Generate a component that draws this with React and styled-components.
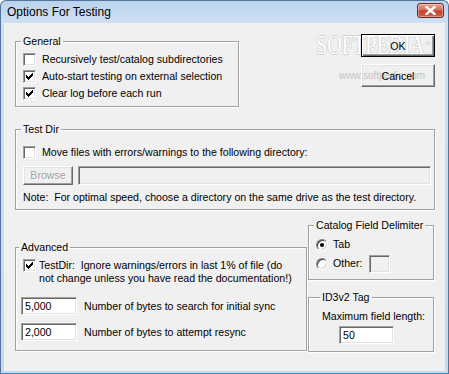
import React from 'react'
import styled, { createGlobalStyle } from 'styled-components'

const GlobalStyle = createGlobalStyle`
  html, body {
    margin: 0;
    padding: 0;
    background: #fff;
  }
  body {
    font-family: "Liberation Sans", Arial, sans-serif;
    font-size: 10.6px;
    color: #000;
  }
  * {
    box-sizing: border-box;
  }
`

const Window = styled.div`
  width: 449px;
  height: 374px;
  display: flex;
  flex-direction: column;
  background: linear-gradient(#bcd3ee, #cfe0f3 22px, #c6d9ef);
  border: 1px solid #55759a;
  border-bottom-color: #2f8fd0;
  border-radius: 6px 6px 0 0;
  overflow: hidden;
`

const TitleBar = styled.div`
  height: 22px;
  flex: none;
  display: flex;
  align-items: center;
  justify-content: space-between;
  padding: 0 4px 0 6px;
  font-size: 12px;
  color: #000;
`

const CloseButton = styled.div`
  width: 27px;
  height: 15px;
  margin-top: -3px;
  display: flex;
  align-items: center;
  justify-content: center;
  border: 1px solid #6d2b1f;
  border-radius: 3px;
  background: linear-gradient(#e7a493, #d3705a 45%, #c0412b 55%, #d2664c);
  box-shadow: inset 0 0 0 1px rgba(255, 255, 255, 0.35);
`

const Client = styled.div`
  position: relative;
  z-index: 0;
  flex: 1;
  margin: 0 3px 2px 3px;
  background: #f0f0f0;
  padding: 11px 10px 0 11px;
  display: flex;
  flex-direction: column;
`

const Row = styled.div`
  display: flex;
  justify-content: space-between;
  align-items: flex-start;
  margin-top: ${p => p.$top || 0}px;
`

const Column = styled.div`
  display: flex;
  flex-direction: column;
  gap: ${p => p.$gap || 0}px;
  margin-top: ${p => p.$top || 0}px;
  margin-right: ${p => p.$right || 0}px;
`

const Group = styled.fieldset`
  margin: ${p => p.$top || 0}px 0 0 0;
  padding: ${p => p.$pad};
  width: ${p => (p.$w ? `${p.$w}px` : 'auto')};
  align-self: ${p => (p.$w ? 'flex-start' : 'stretch')};
  border: 1px solid #a0a0a0;
  box-shadow: inset 1px 1px #fff, 1px 1px #fff;
  display: flex;
  flex-direction: column;
  min-width: 0;
`

const Legend = styled.legend`
  padding: 0 2px;
  margin-left: -2px;
  line-height: 13px;
  height: 13px;
  white-space: nowrap;
`

const Line = styled.div`
  display: flex;
  align-items: ${p => p.$align || 'center'};
  height: ${p => (p.$h ? `${p.$h}px` : 'auto')};
  gap: ${p => p.$gap || 0}px;
  margin-top: ${p => p.$top || 0}px;
  padding-left: ${p => p.$left || 0}px;
  line-height: 13px;
  white-space: pre;
`

const Box = styled.span`
  width: 13px;
  height: 13px;
  flex: none;
  background: #fff;
  border: 1px solid;
  border-color: #a0a0a0 #fff #fff #a0a0a0;
  box-shadow: inset 1px 1px #696969, inset -1px -1px #e3e3e3;
  display: flex;
  align-items: center;
  justify-content: center;
`

const Radio = styled.span`
  width: 12px;
  height: 12px;
  flex: none;
  border-radius: 50%;
  background: #fff;
  border: 1px solid;
  border-color: #808080 #fff #fff #808080;
  box-shadow: inset 1px 1px #404040, inset -1px -1px #d4d0c8;
  display: flex;
  align-items: center;
  justify-content: center;

  &::after {
    content: '';
    width: 4px;
    height: 4px;
    border-radius: 50%;
    background: ${p => (p.$on ? '#000' : 'transparent')};
  }
`

const Button = styled.button`
  width: ${p => p.$w}px;
  height: ${p => p.$h}px;
  padding: 0;
  font: inherit;
  background: transparent;
  border: 1px solid;
  border-color: ${p => (p.$default ? '#000' : '#fff #696969 #696969 #fff')};
  box-shadow: ${p =>
    p.$default
      ? 'inset 1px 1px #fff, inset -1px -1px #696969, inset -2px -2px #a0a0a0'
      : 'inset -1px -1px #a0a0a0, inset 1px 1px #e3e3e3'};
  color: ${p => (p.disabled ? '#a0a0a0' : '#000')};
  text-shadow: ${p => (p.disabled ? '1px 1px #fff' : 'none')};
`

const Edit = styled.input`
  width: ${p => (p.$w ? `${p.$w}px` : 'auto')};
  flex: ${p => (p.$w ? 'none' : 1)};
  min-width: 0;
  height: ${p => p.$h || 18}px;
  margin: 0 0 0 ${p => p.$left || 0}px;
  padding: 0 3px;
  font: inherit;
  color: #000;
  background: ${p => (p.disabled ? '#f0f0f0' : '#fff')};
  border: 1px solid;
  border-color: #a0a0a0 #fff #fff #a0a0a0;
  box-shadow: inset 1px 1px #696969, inset -1px -1px #e3e3e3;
  outline: none;
`

const Label = styled.span`
  line-height: 13px;
  white-space: nowrap;
`

// softpedia stamp: behind the controls' text, over the dialog background
const Watermark = styled.div`
  position: absolute;
  z-index: -1;
  left: 312px;
  top: 8px;
  pointer-events: none;
`

const Brand = styled.div`
  font-family: "Liberation Serif", "DejaVu Serif", serif;
  font-size: 28px;
  line-height: 28px;
  white-space: nowrap;
  color: #fff;
  text-shadow: -1px 0 #d2d2d2, 1px 0 #d2d2d2, 0 1px #d2d2d2, 0 -1px #d2d2d2;
  transform: scaleX(0.72);
  transform-origin: left top;

  sup {
    font-size: 8px;
    vertical-align: top;
    color: #c8c8c8;
    text-shadow: none;
  }
`

const Site = styled.div`
  margin: 11px 0 0 23px;
  font-size: 10px;
  color: #c4c4c4;
`

const Check = () => (
  <svg width="7" height="7" viewBox="0 0 7 7" shapeRendering="crispEdges">
    <path d="M0 2 L2 4 L6 0 L7 0 L7 3 L2 7 L0 5 Z" fill="#000" />
  </svg>
)

const CheckRow = ({ checked, children }) => (
  <Line $h={17} $gap={6}>
    <Box>{checked && <Check />}</Box>
    <span>{children}</span>
  </Line>
)

const App = () => (
  <>
    <GlobalStyle />
    <Window>
      <TitleBar>
        <span>Options For Testing</span>
        <CloseButton>
          <svg width="11" height="9" viewBox="0 0 11 9">
            <path d="M1.5 1 L9.5 8 M9.5 1 L1.5 8" stroke="#fff" strokeWidth="2.4" strokeLinecap="square" />
          </svg>
        </CloseButton>
      </TitleBar>
      <Client>
        <Watermark>
          <Brand>SOFTPEDIA<sup>™</sup></Brand>
          <Site>www.softpedia.com</Site>
        </Watermark>

        <Row>
          <Group $w={224} $top={1} $pad="3px 7px 4px 7px">
            <Legend>General</Legend>
            <CheckRow>Recursively test/catalog subdirectories</CheckRow>
            <CheckRow checked>Auto-start testing on external selection</CheckRow>
            <CheckRow checked>Clear log before each run</CheckRow>
          </Group>
          <Column $gap={7}>
            <Button $w={74} $h={23} $default>OK</Button>
            <Button $w={74} $h={23}>Cancel</Button>
          </Column>
        </Row>

        <Group $top={16} $pad="8px 3px 5px 7px">
          <Legend>Test Dir</Legend>
          <CheckRow>Move files with errors/warnings to the following directory:</CheckRow>
          <Line $top={5} $gap={5}>
            <Button $w={50} $h={19} disabled>Browse</Button>
            <Edit $h={19} disabled defaultValue="" />
          </Line>
          <Line $top={6}>Note:  For optimal speed, choose a directory on the same drive as the test directory.</Line>
        </Group>

        <Row $top={9}>
          <Group $w={292} $top={22} $pad="5px 5px 9px 5px">
            <Legend>Advanced</Legend>
            <Line $align="flex-start" $gap={3} $left={2}>
              <Box><Check /></Box>
              <span>
                TestDir:  Ignore warnings/errors in last 1% of file (do
                <br />
                not change unless you have read the documentation!)
              </span>
            </Line>
            <Line $top={12} $gap={7}>
              <Edit $w={56} defaultValue="5,000" />
              <span>Number of bytes to search for initial sync</span>
            </Line>
            <Line $top={8} $gap={7}>
              <Edit $w={56} defaultValue="2,000" />
              <span>Number of bytes to attempt resync</span>
            </Line>
          </Group>

          <Column $gap={11} $right={1}>
            <Group $w={126} $pad="4px 4px 6px 7px">
              <Legend>Catalog Field Delimiter</Legend>
              <Line $h={17} $gap={5}>
                <Radio $on />
                <span>Tab</span>
              </Line>
              <Line $h={19} $top={1} $gap={5}>
                <Radio />
                <span>Other:</span>
                <Edit $w={21} $left={2} disabled defaultValue="" />
              </Line>
            </Group>
            <Group $w={126} $pad="6px 0 7px 13px">
              <Legend>ID3v2 Tag</Legend>
              <Label>Maximum field length:</Label>
              <Line $top={3} $left={17}>
                <Edit $w={55} defaultValue="50" />
              </Line>
            </Group>
          </Column>
        </Row>
      </Client>
    </Window>
  </>
)

export default App
